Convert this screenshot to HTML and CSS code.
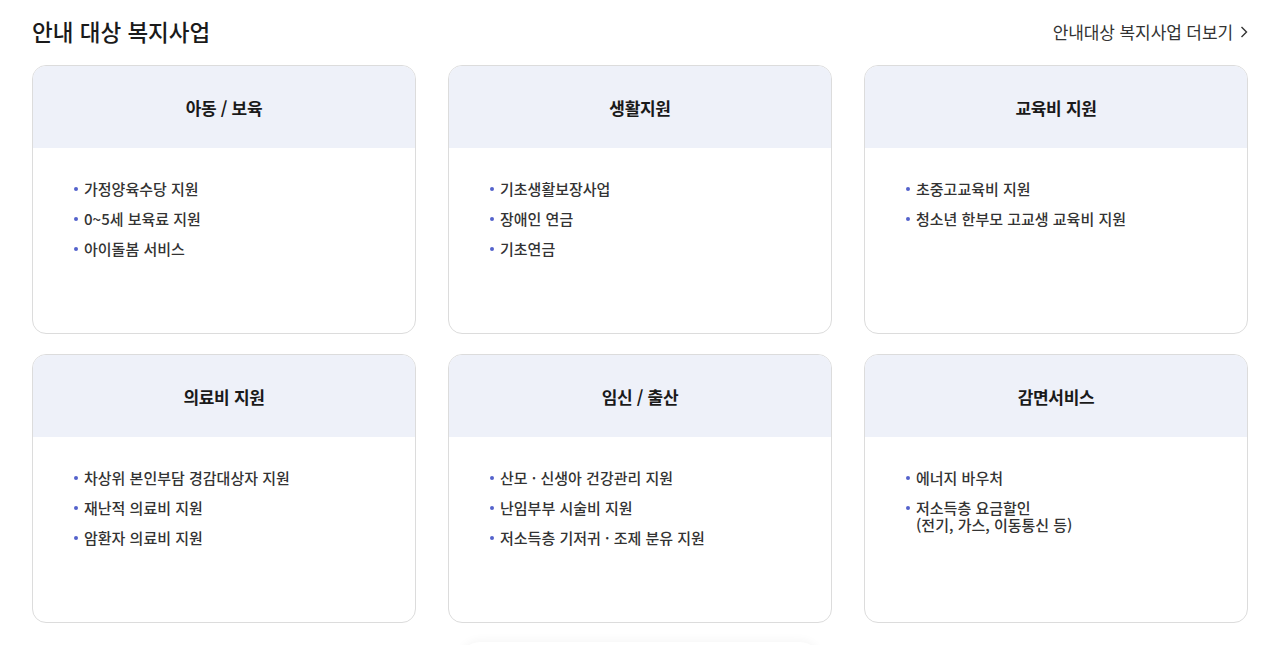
FILE: index.html
```html
<!DOCTYPE html>
<html lang="ko">
<head>
<meta charset="utf-8">
<link rel="stylesheet" href="styles.css">
</head>
<body>
<section class="wrap">
  <div class="top">
    <h2 class="title">안내 대상 복지사업</h2>
    <a class="more" href="#">안내대상 복지사업 더보기<svg class="chev" width="8" height="12" viewBox="0 0 8 12"><path d="M1.5 1l5 5-5 5" fill="none" stroke="#333" stroke-width="1.4"/></svg></a>
  </div>
  <div class="grid">
    <div class="card">
      <div class="head">아동 / 보육</div>
      <ul class="list">
        <li>가정양육수당 지원</li>
        <li>0~5세 보육료 지원</li>
        <li>아이돌봄 서비스</li>
      </ul>
    </div>
    <div class="card">
      <div class="head">생활지원</div>
      <ul class="list">
        <li>기초생활보장사업</li>
        <li>장애인 연금</li>
        <li>기초연금</li>
      </ul>
    </div>
    <div class="card">
      <div class="head">교육비 지원</div>
      <ul class="list">
        <li>초중고교육비 지원</li>
        <li>청소년 한부모 고교생 교육비 지원</li>
      </ul>
    </div>
    <div class="card">
      <div class="head">의료비 지원</div>
      <ul class="list">
        <li>차상위 본인부담 경감대상자 지원</li>
        <li>재난적 의료비 지원</li>
        <li>암환자 의료비 지원</li>
      </ul>
    </div>
    <div class="card">
      <div class="head">임신 / 출산</div>
      <ul class="list">
        <li>산모 · 신생아 건강관리 지원</li>
        <li>난임부부 시술비 지원</li>
        <li>저소득층 기저귀 · 조제 분유 지원</li>
      </ul>
    </div>
    <div class="card">
      <div class="head">감면서비스</div>
      <ul class="list">
        <li>에너지 바우처</li>
        <li>저소득층 요금할인<br>(전기, 가스, 이동통신 등)</li>
      </ul>
    </div>
  </div>
  <div class="below"></div>
</section>
</body>
</html>
```
FILE: styles.css
```css
* { box-sizing: border-box; }
html, body { margin: 0; padding: 0; background: #fff; }
body {
  font-family: "Noto Sans CJK KR", "Noto Sans", sans-serif;
  color: #222;
  overflow: hidden;
  height: 645px;
}
.wrap {
  width: 1216px;
  margin-left: 32px;
  padding-top: 13px;
}
.top {
  display: flex;
  justify-content: space-between;
  align-items: center;
  height: 36px;
}
.title {
  margin: 0;
  font-size: 22.5px;
  font-weight: 500;
  color: #1a1a1a;
}
.more {
  display: flex;
  align-items: center;
  gap: 7px;
  font-size: 17px;
  color: #333;
  text-decoration: none;
  letter-spacing: -0.1px;
}
.chev { margin-top: 1px; }
.grid {
  margin-top: 16px;
  display: grid;
  grid-template-columns: repeat(3, 384px);
  column-gap: 32px;
  row-gap: 20px;
}
.card {
  height: 269px;
  border: 1px solid #dcdcdc;
  border-radius: 14px;
  overflow: hidden;
  background: #fff;
}
.head {
  height: 82px;
  background: #eef1f9;
  display: flex;
  align-items: center;
  justify-content: center;
  font-size: 17px;
  font-weight: 700;
  color: #1a1a1a;
  letter-spacing: -0.3px;
}
.list {
  list-style: none;
  margin: 0;
  padding: 32px 0 0 41px;
}
.list li {
  position: relative;
  padding-left: 10px;
  font-size: 15px;
  line-height: 17px;
  font-weight: 500;
  color: #333;
  margin-bottom: 13px;
}
.list li::before {
  content: "";
  position: absolute;
  left: 0;
  top: 7px;
  width: 4px;
  height: 4px;
  border-radius: 50%;
  background: #5462cc;
}
.below {
  width: 360px;
  height: 40px;
  margin: 19px auto 0;
  border-radius: 20px;
  box-shadow: 0 -2px 10px rgba(0,0,0,0.04);
}
```
